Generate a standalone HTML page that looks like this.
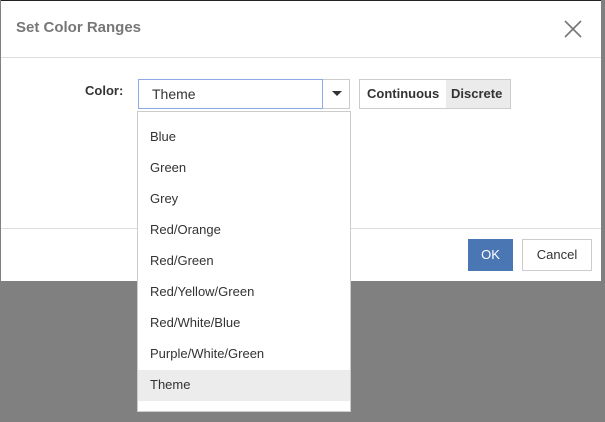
<!DOCTYPE html><html><head><style>
body{margin:0;width:605px;height:422px;background:#808080;position:relative;overflow:hidden;font-family:"Liberation Sans",sans-serif;}
.dlg{position:absolute;left:1px;top:0;width:600px;height:281px;background:#fff}
.ab{position:absolute}
.title{left:15px;top:19px;font-size:15px;font-weight:bold;color:#777}
.item{position:absolute;left:12px;font-size:13px;color:#333}
</style></head><body>
<div class="dlg">
<div class="ab" style="left:0;top:0;width:600px;height:1px;background:#222"></div>
<div class="ab title">Set Color Ranges</div>
<svg class="ab" style="left:563px;top:20px" width="18" height="18"><path d="M1 1L17 17M17 1L1 17" stroke="#777" stroke-width="1.6"/></svg>
<div class="ab" style="left:0;top:57px;width:600px;height:1px;background:#ddd"></div>
<div class="ab" style="left:84px;top:83px;font-size:13px;font-weight:bold;color:#333">Color:</div>
<div class="ab" style="left:137px;top:79px;width:212px;height:30px;border:1px solid #ccc;box-sizing:border-box"></div>
<div class="ab" style="left:137px;top:79px;width:185px;height:30px;border:1px solid #8fa8e8;box-sizing:border-box;font-size:14px;color:#333;padding:6px 0 0 13px">Theme</div>
<div class="ab" style="left:331px;top:91px;border-left:5px solid transparent;border-right:5px solid transparent;border-top:5px solid #333"></div>
<div class="ab" style="left:358px;top:79px;width:152px;height:30px;border:1px solid #ccc;box-sizing:border-box;font-size:13px;font-weight:bold;color:#333;display:flex">
<div style="width:86px;padding:6px 0 0 7px;box-sizing:border-box">Continuous</div><div style="flex:1;background:#ebebeb;padding:6px 0 0 5px">Discrete</div></div>
<div class="ab" style="left:0;top:228px;width:600px;height:1px;background:#ddd"></div>
<div class="ab" style="left:467px;top:239px;width:45px;height:32px;background:#4a76b4;color:#fff;font-size:13px;text-align:center;line-height:31px">OK</div>
<div class="ab" style="left:521px;top:239px;width:70px;height:32px;border:1px solid #ccc;box-sizing:border-box;color:#333;font-size:13px;text-align:center;line-height:29px">Cancel</div>
</div>
<div class="ab" style="left:137px;top:111px;width:214px;height:301px;background:#fff;border:1px solid #ccc;box-sizing:border-box">
<div class="ab" style="left:0;top:258px;width:212px;height:31px;background:#ececec"></div>
<div class="item" style="top:17px">Blue</div>
<div class="item" style="top:48px">Green</div>
<div class="item" style="top:79px">Grey</div>
<div class="item" style="top:110px">Red/Orange</div>
<div class="item" style="top:141px">Red/Green</div>
<div class="item" style="top:172px">Red/Yellow/Green</div>
<div class="item" style="top:203px">Red/White/Blue</div>
<div class="item" style="top:234px">Purple/White/Green</div>
<div class="item" style="top:265px">Theme</div>
</div>
</body></html>
